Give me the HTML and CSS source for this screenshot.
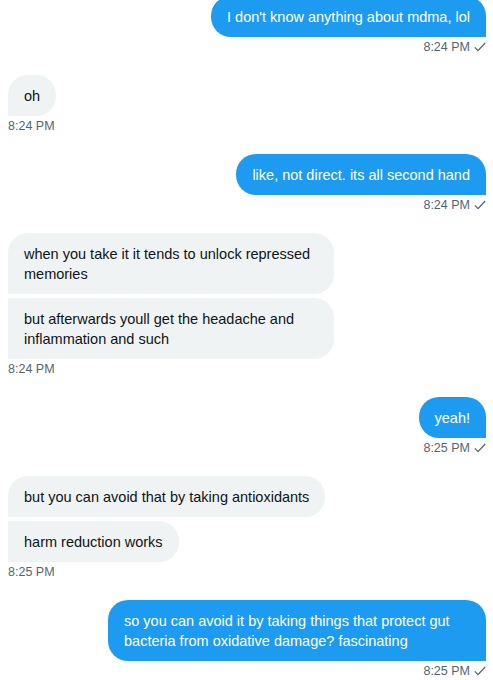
FILE: index.html
```html
<!DOCTYPE html>
<html>
<head>
<meta charset="utf-8">
<link rel="stylesheet" href="styles.css">
</head>
<body>
<div class="chat">
  <div class="group sent">
    <div class="bubble">I don't know anything about mdma, lol</div>
    <div class="meta">8:24 PM <svg class="check" viewBox="0 0 12 10"><path d="M0.8 5.4 L4 8.6 L11.2 1"/></svg></div>
  </div>
  <div class="group recv">
    <div class="bubble">oh</div>
    <div class="meta">8:24 PM</div>
  </div>
  <div class="group sent">
    <div class="bubble">like, not direct. its all second hand</div>
    <div class="meta">8:24 PM <svg class="check" viewBox="0 0 12 10"><path d="M0.8 5.4 L4 8.6 L11.2 1"/></svg></div>
  </div>
  <div class="group recv">
    <div class="bubble">when you take it it tends to unlock repressed memories</div>
    <div class="bubble">but afterwards youll get the headache and inflammation and such</div>
    <div class="meta">8:24 PM</div>
  </div>
  <div class="group sent">
    <div class="bubble">yeah!</div>
    <div class="meta">8:25 PM <svg class="check" viewBox="0 0 12 10"><path d="M0.8 5.4 L4 8.6 L11.2 1"/></svg></div>
  </div>
  <div class="group recv">
    <div class="bubble">but you can avoid that by taking antioxidants</div>
    <div class="bubble">harm reduction works</div>
    <div class="meta">8:25 PM</div>
  </div>
  <div class="group sent">
    <div class="bubble">so you can avoid it by taking things that protect gut bacteria from oxidative damage? fascinating</div>
    <div class="meta">8:25 PM <svg class="check" viewBox="0 0 12 10"><path d="M0.8 5.4 L4 8.6 L11.2 1"/></svg></div>
  </div>
</div>
</body>
</html>
```
FILE: styles.css
```css
* { box-sizing: border-box; }
html, body {
  margin: 0;
  padding: 0;
  background: #ffffff;
  overflow: hidden;
}
body {
  font-family: "Liberation Sans", Arial, sans-serif;
  font-size: 14.5px;
  line-height: 20px;
  color: #0f1419;
}
.chat {
  display: flex;
  flex-direction: column;
  gap: 20px;
  padding: 0 7px 0 8px;
  margin-top: -4px;
}
.group {
  display: flex;
  flex-direction: column;
  gap: 4px;
}
.group.sent { align-items: flex-end; }
.group.recv { align-items: flex-start; }
.bubble {
  padding: 11px 16px 10px;
  border-radius: 20px;
}
.sent .bubble {
  background: #1d9bf0;
  color: #ffffff;
  border-bottom-right-radius: 0;
  max-width: 378px;
}
.recv .bubble {
  background: #eff3f4;
  color: #0f1419;
  max-width: 326px;
  border-bottom-left-radius: 0;
}
.recv .bubble + .bubble { border-top-left-radius: 0; }
.meta {
  margin-top: -2px;
  font-size: 12.5px;
  line-height: 16px;
  color: #536471;
  display: flex;
  align-items: center;
  gap: 4px;
}
.check {
  width: 12px;
  height: 10px;
  fill: none;
  stroke: #536471;
  stroke-width: 1.3;
}
```
